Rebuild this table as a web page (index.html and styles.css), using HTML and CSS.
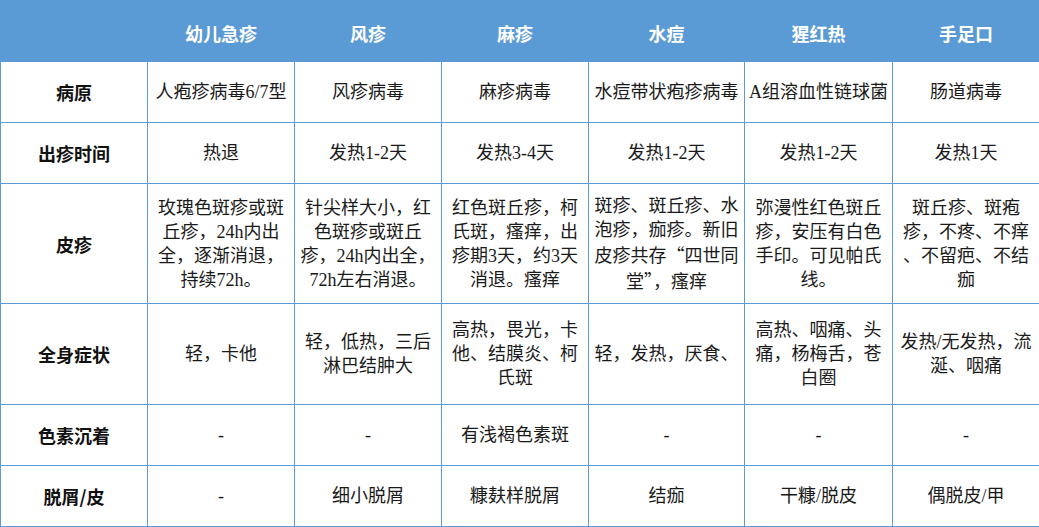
FILE: index.html
```html
<!DOCTYPE html>
<html lang="zh">
<head>
<meta charset="utf-8">
<title>出疹性疾病对比</title>
<link rel="stylesheet" href="styles.css">
</head>
<body>
<table class="cmp">
  <colgroup>
    <col class="c-label">
    <col class="c-std">
    <col class="c-std">
    <col class="c-std">
    <col class="c-wide">
    <col class="c-mid">
    <col class="c-std">
  </colgroup>
  <thead>
    <tr class="r-head">
      <th></th>
      <th>幼儿急疹</th>
      <th>风疹</th>
      <th>麻疹</th>
      <th>水痘</th>
      <th>猩红热</th>
      <th>手足口</th>
    </tr>
  </thead>
  <tbody>
    <tr class="r-s">
      <th>病原</th>
      <td>人疱疹病毒6/7型</td>
      <td>风疹病毒</td>
      <td>麻疹病毒</td>
      <td>水痘带状疱疹病毒</td>
      <td>A组溶血性链球菌</td>
      <td>肠道病毒</td>
    </tr>
    <tr class="r-s">
      <th>出疹时间</th>
      <td>热退</td>
      <td>发热1-2天</td>
      <td>发热3-4天</td>
      <td>发热1-2天</td>
      <td>发热1-2天</td>
      <td>发热1天</td>
    </tr>
    <tr class="r-xl">
      <th>皮疹</th>
      <td>玫瑰色斑疹或斑<br>丘疹，24h内出<br>全，逐渐消退，<br>持续72h。</td>
      <td>针尖样大小，红<br>色斑疹或斑丘<br>疹，24h内出全，<br>72h左右消退。</td>
      <td>红色斑丘疹，柯<br>氏斑，瘙痒，出<br>疹期3天，约3天<br>消退。瘙痒</td>
      <td>斑疹、斑丘疹、水<br>泡疹，痂疹。新旧<br>皮疹共存<span class="q">“</span>四世同<br>堂<span class="q">”</span>，瘙痒</td>
      <td>弥漫性红色斑丘<br>疹，安压有白色<br>手印。可见帕氏<br>线。</td>
      <td>斑丘疹、斑疱<br>疹，不疼、不痒<br>、不留疤、不结<br>痂</td>
    </tr>
    <tr class="r-l">
      <th>全身症状</th>
      <td>轻，卡他</td>
      <td>轻，低热，三后<br>淋巴结肿大</td>
      <td>高热，畏光，卡<br>他、结膜炎、柯<br>氏斑</td>
      <td>轻，发热，厌食、</td>
      <td>高热、咽痛、头<br>痛，杨梅舌，苍<br>白圈</td>
      <td>发热/无发热，流<br>涎、咽痛</td>
    </tr>
    <tr class="r-s">
      <th>色素沉着</th>
      <td>-</td>
      <td>-</td>
      <td>有浅褐色素斑</td>
      <td>-</td>
      <td>-</td>
      <td>-</td>
    </tr>
    <tr class="r-s">
      <th>脱屑/皮</th>
      <td>-</td>
      <td>细小脱屑</td>
      <td>糠麸样脱屑</td>
      <td>结痂</td>
      <td>干糠/脱皮</td>
      <td>偶脱皮/甲</td>
    </tr>
  </tbody>
</table>
</body>
</html>
```

FILE: styles.css
```css
html, body {
  margin: 0;
  padding: 0;
  background: #ffffff;
}

.cmp {
  width: 1039px;
  table-layout: fixed;
  border-collapse: collapse;
  font-family: "Liberation Serif", "Noto Sans CJK SC", sans-serif;
  font-size: 18px;
  line-height: 24px;
  color: #1a1a1a;
}

.c-label { width: 147px; }
.c-std { width: 147px; }
.c-wide { width: 156px; }
.c-mid { width: 148px; }

.cmp th,
.cmp td {
  border: 1px solid #5b9bd5;
  padding: 0 4px;
  text-align: center;
  vertical-align: middle;
  white-space: nowrap;
  overflow: hidden;
}

.cmp thead th {
  background: #5b9bd5;
  color: #ffffff;
  font-family: "Noto Sans CJK SC", sans-serif;
  font-weight: 700;
  border-color: #5b9bd5;
  padding-top: 3px;
}

.cmp tbody th {
  font-family: "Noto Sans CJK SC", sans-serif;
  font-weight: 700;
  color: #111111;
}

.cmp td {
  font-weight: 400;
}

.q {
  font-family: "Noto Sans CJK SC", sans-serif;
}

.r-head { height: 61px; }
.r-s { height: 61px; }
.r-xl { height: 120px; }
.r-l { height: 101px; }
```
